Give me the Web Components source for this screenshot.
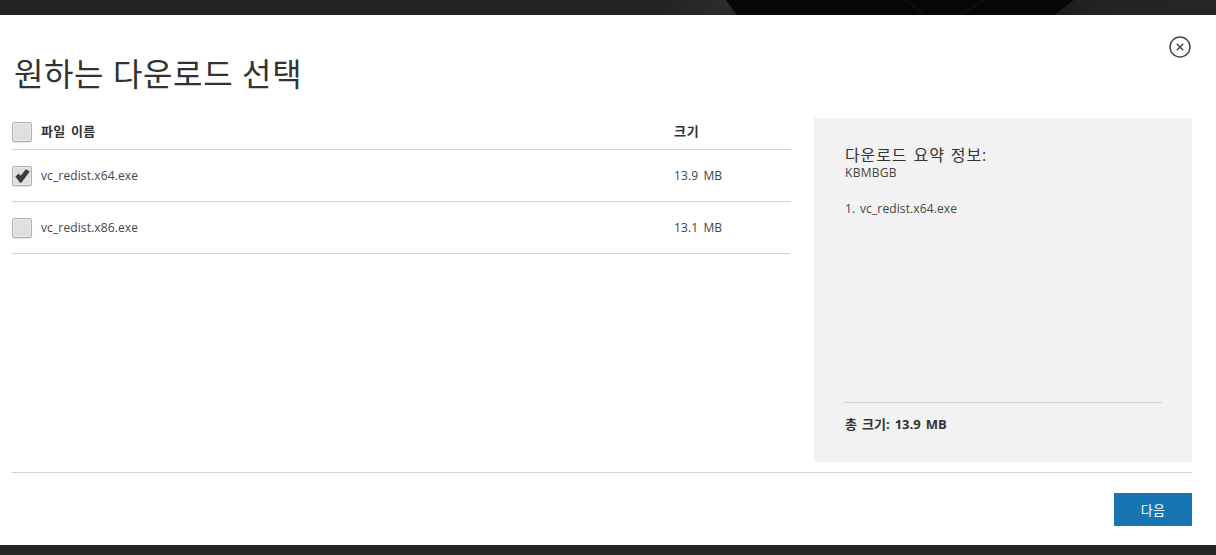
<!DOCTYPE html>
<html lang="ko"><head><meta charset="utf-8">
<style>
html,body{margin:0;padding:0;height:555px;overflow:hidden;background:#262626}
body{font-family:"Open Sans","Noto Sans CJK KR",sans-serif;color:#333}
</style></head>
<body>
<download-page></download-page>
<script>
const FONT='"Open Sans","Noto Sans CJK KR",sans-serif';
class UiCheck extends HTMLElement{
  constructor(){super();this.attachShadow({mode:'open'}).innerHTML=`<style>
  :host{display:block;width:20px;height:20px;flex:none}
  .b{box-sizing:border-box;width:20px;height:20px;border:1px solid #b0b0b0;border-radius:2px;background:#e0e0e0;box-shadow:inset 0 0 0 1px #e9e9e9,0 1px 1px #e6e6e6;display:flex;align-items:center;justify-content:center}
  svg{display:${this.hasAttribute('checked')?'block':'none'}}
  </style><div class="b"><svg width="15" height="14" viewBox="0 0 15 14"><path d="M.4 7.6 3.8 4.6 5.6 6.8 10.8.2 14.8 2.4 6.4 13.8H5Z" fill="#3d3d3d"/></svg></div>`;}
}
customElements.define('ui-check',UiCheck);
class FileRow extends HTMLElement{
  constructor(){super();this.attachShadow({mode:'open'}).innerHTML=`<style>
  :host{display:flex;align-items:center;box-sizing:border-box;height:52px;border-bottom:1px solid #d2d2d2;font-size:12px;color:#444;letter-spacing:.12px;word-spacing:2px}
  .n{margin-left:9px;width:633px}
  </style><slot name="c"></slot><span class="n"><slot name="name"></slot></span><span><slot name="size"></slot></span>`;}
}
customElements.define('file-row',FileRow);
class FileTable extends HTMLElement{
  constructor(){super();this.attachShadow({mode:'open'}).innerHTML=`<style>
  :host{display:block;width:779px;margin-right:23px}
  .h{display:flex;align-items:center;box-sizing:border-box;height:32px;padding-bottom:3px;border-bottom:1px solid #d2d2d2;font-size:13px;font-weight:700;color:#333}
  .h span{padding-bottom:4px}
  .n{margin-left:9px;width:633px;letter-spacing:.25px;word-spacing:2px}
  .s{letter-spacing:.8px}
  file-row:last-of-type{width:778px}
  </style>
  <div class="h"><ui-check></ui-check><span class="n">파일 이름</span><span class="s">크기</span></div>
  <file-row><ui-check slot="c" checked></ui-check><span slot="name">vc_redist.x64.exe</span><span slot="size">13.9 MB</span></file-row>
  <file-row><ui-check slot="c"></ui-check><span slot="name">vc_redist.x86.exe</span><span slot="size">13.1 MB</span></file-row>`;}
}
customElements.define('file-table',FileTable);
class SummaryPanel extends HTMLElement{
  constructor(){super();this.attachShadow({mode:'open'}).innerHTML=`<style>
  :host{display:flex;flex-direction:column;box-sizing:border-box;width:378px;height:344px;background:#f2f2f2;padding:27px 30px 0 31px;color:#333}
  h2{margin:0;font-size:16px;font-weight:400;line-height:21px;letter-spacing:.9px;word-spacing:1px}
  .u{font-size:12px;line-height:14px;margin-top:0;color:#444;letter-spacing:.3px}
  .l{font-size:12px;line-height:16px;margin-top:21px;color:#444;display:flex;gap:6px;letter-spacing:.12px}
  .l i{font-style:normal;width:9px}
  .t{margin:auto 0 0 -1px;border-top:1px solid #d2d2d2;height:60px;box-sizing:border-box;padding-top:12px;font-size:13px;font-weight:700;line-height:18px;color:#333;padding-left:1px;letter-spacing:.05px;word-spacing:1.5px}
  </style>
  <h2>다운로드 요약 정보:</h2><div class="u">KBMBGB</div>
  <div class="l"><i>1.</i><span>vc_redist.x64.exe</span></div>
  <div class="t">총 크기: 13.9 MB</div>`;}
}
customElements.define('summary-panel',SummaryPanel);
class TopBand extends HTMLElement{
  constructor(){super();this.attachShadow({mode:'open'}).innerHTML=`<style>
  :host{display:block;height:15px;flex:none;line-height:0}
  svg{display:block;width:1216px;height:15px}
  </style><svg viewBox="0 0 1216 15"><defs>
    <linearGradient id="l"><stop offset="0" stop-color="#232323"/><stop offset=".9" stop-color="#232323"/><stop offset="1" stop-color="#2c2c2c"/></linearGradient>
    <linearGradient id="r"><stop offset="0" stop-color="#1b1b1b"/><stop offset=".3" stop-color="#232323"/><stop offset="1" stop-color="#262626"/></linearGradient></defs>
    <rect width="730" height="15" fill="url(#l)"/><rect x="1050" width="166" height="15" fill="url(#r)"/>
    <polygon points="726,0 737,15 1054,15 1074,0" fill="#060606"/>
    <path d="M905 0 925 15M960 15 985 0" stroke="#0f0f0f" stroke-width="2" fill="none"/>
  </svg>`;}
}
customElements.define('top-band',TopBand);
class DownloadPage extends HTMLElement{
  constructor(){super();this.attachShadow({mode:'open'}).innerHTML=`<style>
  :host{display:flex;flex-direction:column;height:555px;font-family:${FONT};background:#262626}
  .m{background:#fff;height:530px;flex:none;box-sizing:border-box;padding:0 24px 0 12px;position:relative}
  h1{margin:0;padding:35px 0 0 2px;height:103px;box-sizing:border-box;font-size:32px;font-weight:400;line-height:47px;color:#333;letter-spacing:.6px}
  .c{display:flex;height:344px}
  .f{border-top:1px solid #d2d2d2;margin-top:10px;padding-top:20px;display:flex;justify-content:flex-end}
  button{width:78px;height:33px;border:0;padding:0;background:#1776b1;color:#fff;font:400 13px ${FONT};letter-spacing:.3px}
  .x{position:absolute;top:21px;right:25px;width:22px;height:22px;display:block}
  </style>
  <top-band></top-band>
  <div class="m">
    <svg class="x" viewBox="0 0 22 22"><circle cx="11" cy="11" r="10" fill="none" stroke="#4a4a4a" stroke-width="1.5"/><path d="M7.8 7.8 14.2 14.2M14.2 7.8 7.8 14.2" stroke="#4a4a4a" stroke-width="1.6"/></svg>
    <h1>원하는 다운로드 선택</h1>
    <div class="c"><file-table></file-table><summary-panel></summary-panel></div>
    <div class="f"><button>다음</button></div>
  </div>`;}
}
customElements.define('download-page',DownloadPage);
</script>
</body></html>
